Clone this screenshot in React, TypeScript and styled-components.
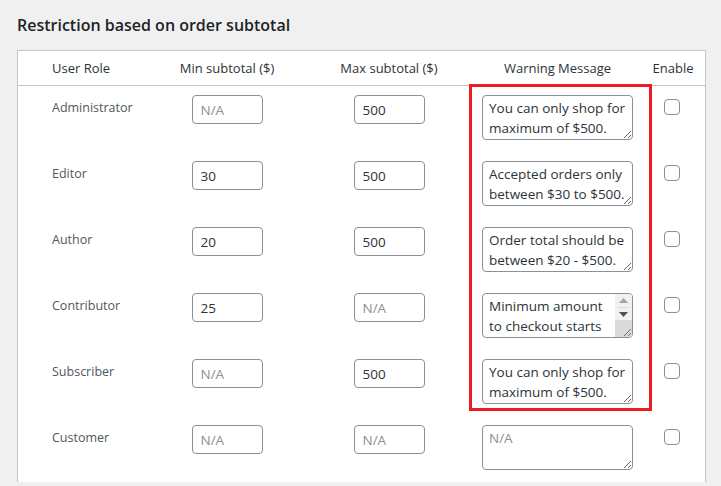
import React from "react"
import styled, { createGlobalStyle } from "styled-components"

const GlobalStyle = createGlobalStyle`
  body {
    margin: 0;
    background: #f0f0f1;
    font-family: "Open Sans", "Liberation Sans", sans-serif;
    color: #3c434a;
  }
`

const Page = styled.div`
  padding: 13px 15px 40px 17px;
`

const Title = styled.h2`
  margin: 0 0 12px;
  font-size: 16px;
  font-weight: 600;
  line-height: 25px;
  color: #1d2327;
`

const Table = styled.div`
  position: relative;
  width: 687px;
  background: #fff;
  border: 1px solid #c3c4c7;
  border-bottom: none;
`

const cols = "132px 154px 170px 167px 64px"

const HeaderRow = styled.div`
  display: grid;
  grid-template-columns: ${cols};
  height: 34px;
  align-items: center;
  border-bottom: 1px solid #c3c4c7;
  font-size: 13px;
  color: #2c3338;
`

const HeadCell = styled.div<{ $left?: boolean }>`
  text-align: ${(p) => (p.$left ? "left" : "center")};
  padding-left: ${(p) => (p.$left ? "34px" : "0")};
  white-space: nowrap;
`

const Row = styled.div`
  display: grid;
  grid-template-columns: ${cols};
  align-items: start;
  padding: 9px 0 12px;
  height: 45px;
`

const RoleCell = styled.div`
  padding: 3px 0 0 34px;
  font-size: 12.5px;
  line-height: 20px;
  color: #50575e;
`

const Cell = styled.div`
  display: flex;
  justify-content: center;
`

const Input = styled.input`
  box-sizing: border-box;
  width: 71px;
  height: 29px;
  padding: 0 8px;
  border: 1px solid #8c8f94;
  border-radius: 4px;
  font-family: inherit;
  font-size: 13.5px;
  color: #2c3338;
  background: #fff;
  outline: none;

  &::placeholder {
    color: #8c8f94;
  }
`

const TextWrap = styled.div`
  position: relative;
  display: flex;
`

const TextArea = styled.textarea<{ $scroll?: boolean }>`
  box-sizing: border-box;
  width: 151px;
  height: 45px;
  padding: 2px ${(p) => (p.$scroll ? "23px" : "6px")} 2px 6px;
  border: 1px solid #8c8f94;
  border-radius: 4px;
  font-family: inherit;
  font-size: 13.5px;
  line-height: 20px;
  color: #2c3338;
  background: #fff;
  outline: none;
  resize: vertical;
  overflow: hidden;

  &::placeholder {
    color: #8c8f94;
  }
`

/* classic scrollbar drawn over the textarea (the headless browser hides real ones) */
const ScrollBar = styled.div`
  position: absolute;
  top: 1px;
  right: 1px;
  bottom: 1px;
  width: 17px;
  display: flex;
  flex-direction: column;
  background: #f1f1f1;
  border-radius: 0 3px 3px 0;
  overflow: hidden;
`

const Arrow = styled.div<{ $down?: boolean }>`
  height: ${(p) => (p.$down ? "12px" : "13px")};
  display: flex;
  align-items: center;
  justify-content: center;
  border-bottom: ${(p) => (p.$down ? "none" : "1px solid #dcdcdc")};
  margin: 0 3px;
`

const Corner = styled.div`
  flex: 1;
  background: #dadada;
  display: flex;
  align-items: flex-end;
  justify-content: flex-end;
`

const CheckCell = styled.div`
  display: flex;
  justify-content: center;
  padding: 4px 3px 0 0;
`

const Checkbox = styled.input.attrs({ type: "checkbox" })`
  appearance: none;
  margin: 0;
  width: 16px;
  height: 16px;
  border: 1px solid #8c8f94;
  border-radius: 4px;
  background: #fff;
`

const Highlight = styled.div`
  position: absolute;
  left: 451px;
  top: 33px;
  width: 177px;
  height: 321px;
  border: 3px solid #ec1c24;
  pointer-events: none;
`

const rows = [
  { role: "Administrator", min: "", max: "500", msg: "You can only shop for maximum of $500." },
  { role: "Editor", min: "30", max: "500", msg: "Accepted orders only between $30 to $500." },
  { role: "Author", min: "20", max: "500", msg: "Order total should be between $20 - $500." },
  { role: "Contributor", min: "25", max: "", msg: "Minimum amount to checkout starts from $25.", scroll: true },
  { role: "Subscriber", min: "", max: "500", msg: "You can only shop for maximum of $500." },
  { role: "Customer", min: "", max: "", msg: "" },
]

const App = () => {
  return (
    <Page>
      <GlobalStyle />
      <Title>Restriction based on order subtotal</Title>
      <Table>
        <HeaderRow>
          <HeadCell $left>User Role</HeadCell>
          <HeadCell>Min subtotal ($)</HeadCell>
          <HeadCell>Max subtotal ($)</HeadCell>
          <HeadCell>Warning Message</HeadCell>
          <HeadCell>Enable</HeadCell>
        </HeaderRow>
        {rows.map((r) => (
          <Row key={r.role}>
            <RoleCell>{r.role}</RoleCell>
            <Cell>
              <Input defaultValue={r.min} placeholder="N/A" />
            </Cell>
            <Cell>
              <Input defaultValue={r.max} placeholder="N/A" />
            </Cell>
            <Cell>
              <TextWrap>
                <TextArea defaultValue={r.msg} placeholder="N/A" $scroll={r.scroll} />
                {r.scroll && (
                  <ScrollBar>
                    <Arrow>
                      <svg width="9" height="5" viewBox="0 0 9 5">
                        <path d="M0 5 L4.5 0 L9 5 Z" fill="#a3a3a3" />
                      </svg>
                    </Arrow>
                    <Arrow $down>
                      <svg width="9" height="5" viewBox="0 0 9 5">
                        <path d="M0 0 L9 0 L4.5 5 Z" fill="#505050" />
                      </svg>
                    </Arrow>
                    <Corner>
                      <svg width="10" height="10" viewBox="0 0 10 10">
                        <path d="M9 2 L2 9 M9 6 L6 9" stroke="#6e6e6e" strokeWidth="1" />
                      </svg>
                    </Corner>
                  </ScrollBar>
                )}
              </TextWrap>
            </Cell>
            <CheckCell>
              <Checkbox />
            </CheckCell>
          </Row>
        ))}
        <Highlight />
      </Table>
    </Page>
  )
}

export default App
